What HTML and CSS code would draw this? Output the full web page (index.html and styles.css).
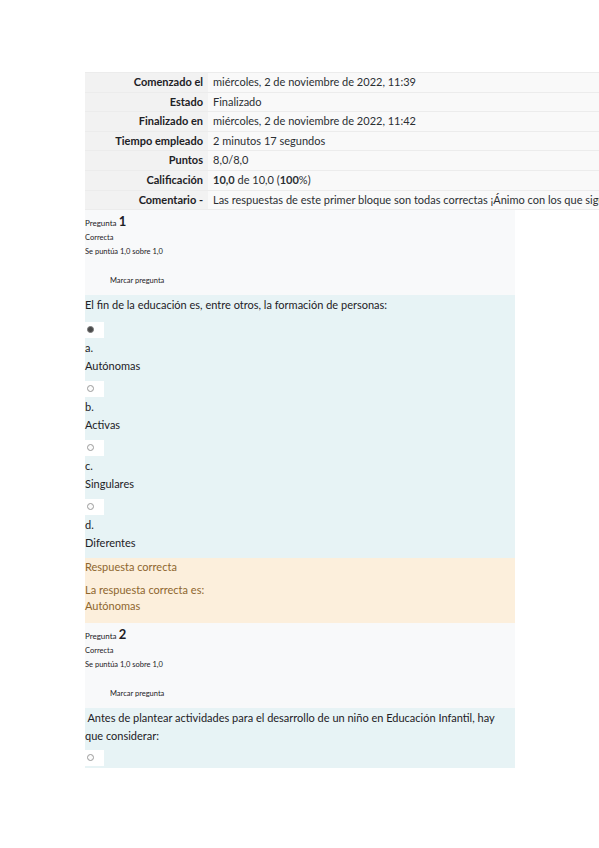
FILE: index.html
```html
<!DOCTYPE html>
<html lang="es">
<head>
<meta charset="utf-8">
<title>Revisión del intento</title>
<link rel="stylesheet" href="styles.css">
</head>
<body>
<div class="page">
  <table class="summary">
    <tr><th>Comenzado el</th><td>miércoles, 2 de noviembre de 2022, 11:39</td></tr>
    <tr><th>Estado</th><td>Finalizado</td></tr>
    <tr><th>Finalizado en</th><td>miércoles, 2 de noviembre de 2022, 11:42</td></tr>
    <tr><th>Tiempo empleado</th><td>2 minutos 17 segundos</td></tr>
    <tr><th>Puntos</th><td>8,0/8,0</td></tr>
    <tr><th>Calificación</th><td><b>10,0</b> de 10,0 (<b>100</b>%)</td></tr>
    <tr><th>Comentario -</th><td>Las respuestas de este primer bloque son todas correctas ¡Ánimo con los que siguen!</td></tr>
  </table>

  <div class="question">
    <div class="info">
      <div class="qno">Pregunta <span class="num">1</span></div>
      <div class="state">Correcta</div>
      <div class="grade">Se puntúa 1,0 sobre 1,0</div>
      <div class="flag">Marcar pregunta</div>
    </div>
    <div class="content">
      <div class="qtext">El fin de la educación es, entre otros, la formación de personas:</div>
      <div class="option"><span class="radio checked"></span><div class="line">a.</div><div class="line">Autónomas</div></div>
      <div class="option"><span class="radio"></span><div class="line">b.</div><div class="line">Activas</div></div>
      <div class="option"><span class="radio"></span><div class="line">c.</div><div class="line">Singulares</div></div>
      <div class="option"><span class="radio"></span><div class="line">d.</div><div class="line">Diferentes</div></div>
    </div>
    <div class="feedback">
      <div class="fb-title">Respuesta correcta</div>
      <div class="fb-line">La respuesta correcta es:</div>
      <div class="fb-line">Autónomas</div>
    </div>
  </div>

  <div class="question">
    <div class="info">
      <div class="qno">Pregunta <span class="num">2</span></div>
      <div class="state">Correcta</div>
      <div class="grade">Se puntúa 1,0 sobre 1,0</div>
      <div class="flag">Marcar pregunta</div>
    </div>
    <div class="content content-2">
      <div class="qtext">&nbsp;Antes de plantear actividades para el desarrollo de un niño en Educación Infantil, hay que considerar:</div>
      <div class="option option-last"><span class="radio"></span></div>
    </div>
  </div>
</div>
</body>
</html>
```
FILE: styles.css
```css
html, body {
  margin: 0;
  padding: 0;
  background: #ffffff;
  overflow: hidden;
}
body {
  font-family: "Lato", "Open Sans", "Liberation Sans", sans-serif;
  color: #1d2125;
}
.page {
  padding: 72px 0 0 85px;
  width: 600px;
}
.summary {
  border-collapse: collapse;
  width: 640px;
  font-size: 11px;
  border-top: 1px solid #ececec;
}
.summary th, .summary td {
  height: 18.6px;
  padding: 0;
  border-bottom: 1px solid #ececec;
  white-space: nowrap;
  line-height: 18.6px;
}
.summary th {
  width: 118px;
  text-align: right;
  padding-right: 5px;
  background: #f2f2f2;
  font-weight: 700;
  color: #1d2125;
}
.summary td {
  padding-left: 5px;
  background: #f9f9f9;
  color: #2b2f33;
}
.summary b { font-weight: 700; }

.question {
  width: 430px;
}
.info {
  background: #f8f9fa;
  padding: 3px 0 7px 0;
}
.qno {
  font-size: 8px;
  line-height: 16px;
  color: #1d2125;
}
.qno .num {
  font-size: 13px;
  font-weight: 700;
}
.state, .grade {
  font-size: 7.5px;
  line-height: 14px;
  color: #1d2125;
}
.flag {
  margin-top: 15px;
  padding-left: 25px;
  font-size: 7.5px;
  line-height: 14px;
  color: #1d2125;
}
.content {
  background: #e7f3f5;
  padding: 1px 0 0 0;
}
.qtext {
  font-size: 11px;
  line-height: 18px;
  margin-bottom: 8px;
}
.option {
  padding-bottom: 6px;
}
.radio {
  display: block;
  position: relative;
  width: 19px;
  height: 16px;
  background: #ffffff;
  margin-bottom: 1px;
}
.radio::after {
  content: "";
  position: absolute;
  left: 2px;
  top: 4px;
  width: 5px;
  height: 5px;
  border: 1px solid #9a9a9a;
  border-radius: 50%;
  background: #fbfbfb;
}
.radio.checked::after {
  background: #4a4a4a;
  border-color: #7a7a7a;
}
.line {
  font-size: 11px;
  line-height: 18px;
}
.feedback {
  background: #fcefdc;
  color: #8e662e;
  padding: 0 0 9px 0;
}
.fb-title {
  font-size: 11px;
  line-height: 17px;
  margin-bottom: 7px;
}
.fb-line {
  font-size: 11px;
  line-height: 16px;
}
.content-2 {
  padding-top: 1px;
}
.content-2 .qtext {
  margin-bottom: 5px;
}
.option-last {
  padding-bottom: 1px;
}
```
